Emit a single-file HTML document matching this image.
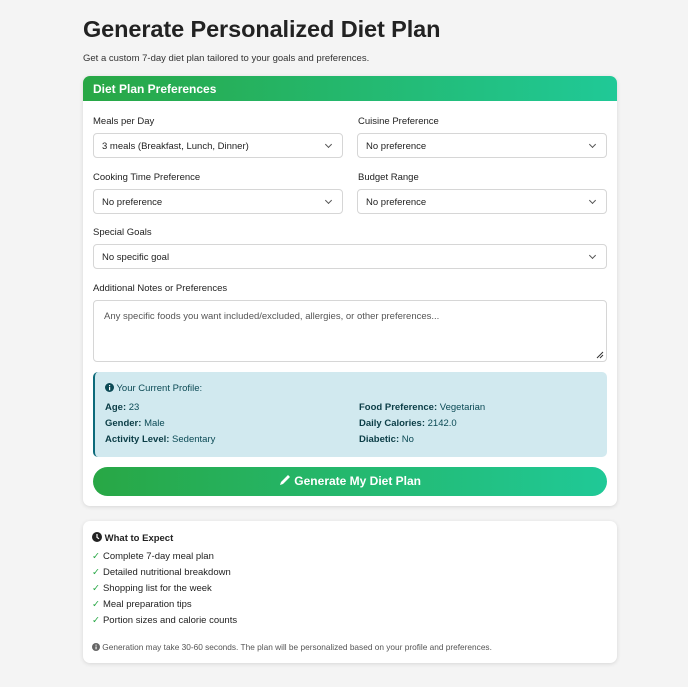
<!DOCTYPE html>
<html><head><meta charset="utf-8"><style>
*{box-sizing:border-box;margin:0;padding:0}
body{width:688px;height:687px;background:#f4f4f4;font-family:"Liberation Sans",sans-serif;color:#212529;position:relative;overflow:hidden}
.a{position:absolute}
h1{position:absolute;left:83px;top:16px;font-size:23.5px;font-weight:700;color:#222;letter-spacing:-0.1px}
.sub{left:83px;top:53px;font-size:9.5px;color:#333}
.card{background:#fff;border-radius:7px;box-shadow:0 1px 4px rgba(0,0,0,.12)}
.hdr{left:83px;top:76px;width:534px;height:25px;border-radius:7px 7px 0 0;background:linear-gradient(90deg,#28a745,#20c997);color:#fff;font-weight:700;font-size:12px;padding:6px 10px}
.lbl{font-size:9.5px;color:#222}
.sel{height:25px;border:1px solid #d6d6d6;border-radius:4px;font-size:9.5px;padding:7px 8px;color:#222;background:#fff}
.sel:after{content:"";position:absolute;right:11px;top:8px;width:4px;height:4px;border-right:1px solid #555;border-bottom:1px solid #555;transform:rotate(45deg)}
.prof{left:93px;top:372px;width:514px;height:85px;background:#d1e9ef;border-left:2px solid #0c6a7a;border-radius:5px;font-size:9.5px;color:#0b4a55}
.prof b{color:#0b3d46}
.btn{left:93px;top:467px;width:514px;height:29px;border-radius:15px;background:linear-gradient(90deg,#28a745,#20c997);color:#fff;font-weight:700;font-size:12px;text-align:center;line-height:29px}
.li{left:92px;font-size:9.5px;color:#222}
.li span{color:#28a745;margin-right:3px}
</style></head><body>
<h1>Generate Personalized Diet Plan</h1>
<div class="a sub">Get a custom 7-day diet plan tailored to your goals and preferences.</div>
<div class="a card" style="left:83px;top:76px;width:534px;height:430px"></div>
<div class="a hdr">Diet Plan Preferences</div>
<div class="a lbl" style="left:93px;top:116px">Meals per Day</div>
<div class="a lbl" style="left:358px;top:116px">Cuisine Preference</div>
<div class="a sel" style="left:93px;top:133px;width:250px">3 meals (Breakfast, Lunch, Dinner)</div>
<div class="a sel" style="left:357px;top:133px;width:250px">No preference</div>
<div class="a lbl" style="left:93px;top:172px">Cooking Time Preference</div>
<div class="a lbl" style="left:358px;top:172px">Budget Range</div>
<div class="a sel" style="left:93px;top:189px;width:250px">No preference</div>
<div class="a sel" style="left:357px;top:189px;width:250px">No preference</div>
<div class="a lbl" style="left:93px;top:227px">Special Goals</div>
<div class="a sel" style="left:93px;top:244px;width:514px">No specific goal</div>
<div class="a lbl" style="left:93px;top:283px">Additional Notes or Preferences</div>
<div class="a" style="left:93px;top:300px;width:514px;height:62px;border:1px solid #d6d6d6;border-radius:4px;font-size:9.5px;color:#555;padding:10px 10px">Any specific foods you want included/excluded, allergies, or other preferences...
<svg class="a" style="right:2px;bottom:2px" width="8" height="8"><path d="M1 7L7 1M4 7L7 4" stroke="#333" stroke-width="1"/></svg></div>
<div class="a prof">
<div class="a" style="left:10px;top:11px"><svg width="9" height="9" style="vertical-align:-1px"><circle cx="4.5" cy="4.5" r="4.5" fill="#0b4a55"/><rect x="4" y="4" width="1.2" height="3.2" fill="#fff"/><rect x="4" y="2" width="1.2" height="1.2" fill="#fff"/></svg> Your Current Profile:</div>
<div class="a" style="left:10px;top:30px"><b>Age:</b> 23</div>
<div class="a" style="left:10px;top:46px"><b>Gender:</b> Male</div>
<div class="a" style="left:10px;top:62px"><b>Activity Level:</b> Sedentary</div>
<div class="a" style="left:264px;top:30px"><b>Food Preference:</b> Vegetarian</div>
<div class="a" style="left:264px;top:46px"><b>Daily Calories:</b> 2142.0</div>
<div class="a" style="left:264px;top:62px"><b>Diabetic:</b> No</div>
</div>
<div class="a btn"><svg width="12" height="12" style="vertical-align:-1px"><path d="M1 11L2 8L9 1L11 3L4 10Z" fill="#fff"/></svg> Generate My Diet Plan</div>
<div class="a card" style="left:83px;top:521px;width:534px;height:142px"></div>
<div class="a" style="left:92px;top:532px;font-size:9.5px;font-weight:700;color:#222"><svg width="10" height="10" style="vertical-align:-1px"><circle cx="5" cy="5" r="5" fill="#222"/><path d="M5 2V5.3L7 6.8" stroke="#fff" stroke-width="1.2" fill="none"/></svg> What to Expect</div>
<div class="a li" style="top:551px"><span>✓</span>Complete 7-day meal plan</div>
<div class="a li" style="top:567px"><span>✓</span>Detailed nutritional breakdown</div>
<div class="a li" style="top:583px"><span>✓</span>Shopping list for the week</div>
<div class="a li" style="top:599px"><span>✓</span>Meal preparation tips</div>
<div class="a li" style="top:615px"><span>✓</span>Portion sizes and calorie counts</div>
<div class="a" style="left:92px;top:642px;font-size:8.3px;color:#555"><svg width="8" height="8" style="vertical-align:-1px"><circle cx="4" cy="4" r="4" fill="#666"/><rect x="3.5" y="3.5" width="1.1" height="2.8" fill="#fff"/><rect x="3.5" y="1.6" width="1.1" height="1.1" fill="#fff"/></svg> Generation may take 30-60 seconds. The plan will be personalized based on your profile and preferences.</div>
</body></html>
